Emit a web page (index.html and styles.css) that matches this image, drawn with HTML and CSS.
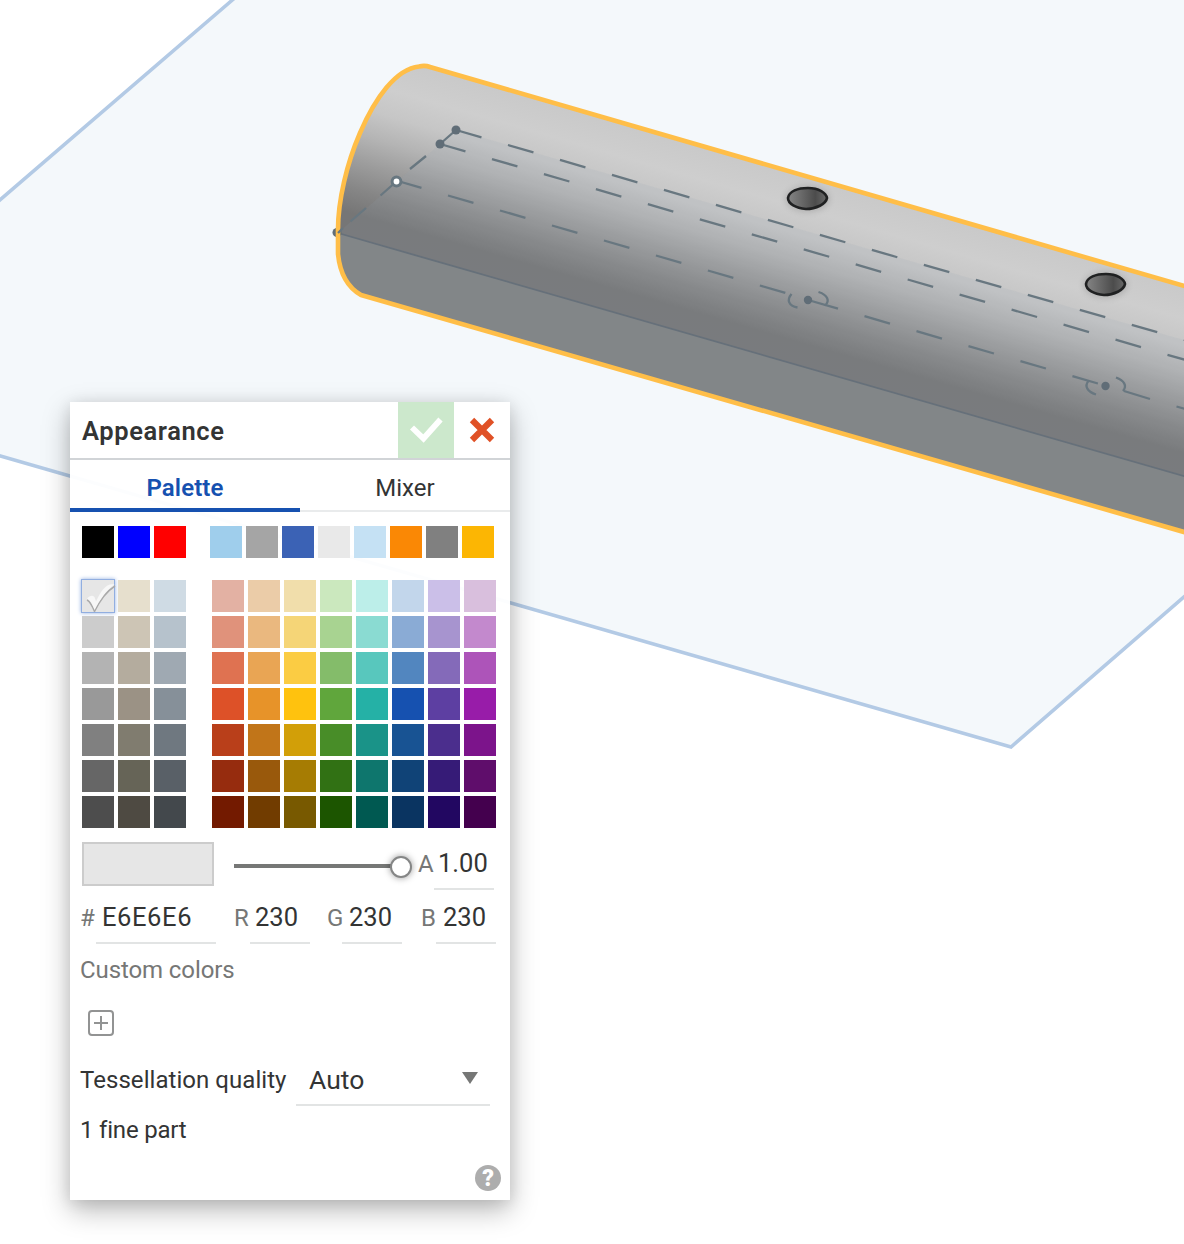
FILE: index.html
```html
<!DOCTYPE html>
<html lang="en">
<head>
<meta charset="utf-8">
<title>Appearance</title>
<link rel="stylesheet" href="styles.css">
</head>
<body>
<main class="workspace">
  <svg class="scene" viewBox="0 0 1184 1244" aria-hidden="true">
    <defs>
      <linearGradient id="tube" gradientUnits="userSpaceOnUse" x1="427" y1="66" x2="375.9" y2="243.3">
        <stop offset="0" stop-color="#c9c9c9"/>
        <stop offset=".18" stop-color="#cecece"/>
        <stop offset=".32" stop-color="#c6c6c6"/>
        <stop offset=".46" stop-color="#b4b4b4"/>
        <stop offset=".6" stop-color="#9d9d9d"/>
        <stop offset=".75" stop-color="#868686"/>
        <stop offset=".88" stop-color="#767676"/>
        <stop offset="1" stop-color="#767677"/>
      </linearGradient>
      <linearGradient id="bore">
        <stop offset="0" stop-color="#858585"/>
        <stop offset=".7" stop-color="#4c4c4c"/>
        <stop offset="1" stop-color="#6a6a6a"/>
      </linearGradient>
      <filter id="halo" x="-40%" y="-60%" width="180%" height="220%"><feGaussianBlur stdDeviation="3"/></filter>
    </defs>
    <path class="plane" d="M233-.5-10 208.5V453L1011 747 1200 583V-10H244Z"/>
    <path fill="url(#tube)" d="M1200 290.600 430 67Q425 65 419 66.500C396 69 375 98 360 133 347 163 338 200 338 230V254C340 274 347 287 361 295L1200 536.600Z"/>
    <path class="sketch-face" d="M456 130 1200 344.500V480.700L338 233Z"/>
    <path class="underside" d="M338 233 1200 480.700V536.600L361 295C347 287 340 274 338 254Z"/>
    <path class="seam" d="M338 233 1200 480.700"/>
    <circle class="node" cx="337" cy="232.500" r="4.500"/>
    <path class="outline" d="M1200 290.600 430 67Q425 65 419 66.500C396 69 375 98 360 133 347 163 338 200 338 230V254C340 274 347 287 361 295L1200 536.600"/>
    <g class="sketch">
      <path d="M338 233 343 228M350.500 221.500 366 208M380.500 195.500 393 184.500M410 169 426 156M440 144 456 130"/>
      <path class="dashes" d="M456 130 1200 344.500"/>
      <path class="dashes" d="M440 144 1200 364.200"/>
      <path class="dashes" d="M396 180.500 798 296.500"/>
      <path d="M808 300 838 308.600"/>
      <path class="dashes" d="M864.500 316.200 1100 384.100"/>
      <path d="M1124 391 1150 399M1176.500 406.500 1200 413.300"/>
      <path d="M791.500 294C786.500 300 788.500 306 797.500 307.500M818.500 292C828 295 830 301 825 305.500"/>
      <path d="M1088.500 381C1084 386 1087.500 392 1096 394.500M1116 377.500C1124 380.500 1127.500 385.500 1123 391"/>
    </g>
    <circle class="node" cx="456" cy="130" r="4.500"/>
    <circle class="node" cx="440" cy="144" r="4.500"/>
    <circle class="node" cx="808" cy="300" r="4.200"/>
    <circle class="node" cx="1105.500" cy="386" r="4.200"/>
    <circle class="origin" cx="396.500" cy="181.500" r="4.400"/>
    <g class="hole">
      <ellipse class="hole-halo" cx="807.500" cy="199" rx="22" ry="13"/>
      <path fill="url(#bore)" d="M788 198C789 191 798 188 808 188 819 188 826 193 827 198 826 204 816 209 806 209 796 208 788 204 788 198Z"/>
    </g>
    <g class="hole" transform="translate(298 86)">
      <ellipse class="hole-halo" cx="807.500" cy="199" rx="22" ry="13"/>
      <path fill="url(#bore)" d="M788 198C789 191 798 188 808 188 819 188 826 193 827 198 826 204 816 209 806 209 796 208 788 204 788 198Z"/>
    </g>
  </svg>

  <section class="dialog">
    <header class="dialog-head">
      <h1 class="title">Appearance</h1>
      <button class="accept" aria-label="Accept"><svg width="56" height="56" viewBox="0 0 56 56"><path d="M14 25.500 25.500 36.500 42.500 17.500" fill="none" stroke="#fff" stroke-width="5.800"/></svg></button>
      <button class="cancel" aria-label="Cancel"><svg width="56" height="56" viewBox="0 0 56 56"><path d="M18 18 38 38M38 18 18 38" fill="none" stroke="#e05126" stroke-width="6.200"/></svg></button>
    </header>
    <nav class="tabs">
      <a class="tab active"><span>Palette</span></a>
      <a class="tab"><span>Mixer</span></a>
    </nav>
    <div class="swatch-row recent">
      <div class="swatches three" data-palette="base"></div>
      <div class="swatches eight" data-palette="recent"></div>
    </div>
    <div class="swatch-row palette">
      <div class="swatches three" data-palette="neutral"></div>
      <div class="swatches eight" data-palette="hues"></div>
    </div>
    <div class="alpha-row">
      <div class="preview"></div>
      <div class="slider"><div class="thumb"></div></div>
      <div class="field alpha"><label>A</label><span class="value">1.00</span></div>
    </div>
    <div class="rgb-row">
      <div class="field hex"><label>#</label><span class="value">E6E6E6</span></div>
      <div class="field red"><label>R</label><span class="value">230</span></div>
      <div class="field green"><label>G</label><span class="value">230</span></div>
      <div class="field blue"><label>B</label><span class="value">230</span></div>
    </div>
    <div class="custom"><span>Custom colors</span></div>
    <button class="add" aria-label="Add color"><svg width="26" height="26" viewBox="0 0 26 26"><rect x="1" y="1" width="24" height="24" rx="3"/><path d="M6 13H20M13 6V20"/></svg></button>
    <div class="quality">
      <span class="quality-label">Tessellation quality</span>
      <div class="select"><span>Auto</span><svg width="16" height="12" viewBox="0 0 16 12"><path d="M0 0H16L8 12Z" fill="#767776"/></svg></div>
    </div>
    <div class="parts"><span>1 fine part</span></div>
    <footer class="foot"><span class="help">?</span></footer>
  </section>
</main>
<script src="palette.js"></script>
</body>
</html>
```
FILE: styles.css
```css
* { box-sizing: border-box; }
body { margin: 0; background: #fff; color: #333434; font: 24px/30px Roboto, "Liberation Sans", sans-serif; }
.workspace { position: relative; width: 1184px; height: 1244px; overflow: hidden; }
.scene { display: block; width: 1184px; height: 1244px; }
.plane { fill: #f4f8fb; stroke: #b3cae5; stroke-width: 3.6; }
.sketch-face { fill: #93a7b6; fill-opacity: .12; }
.underside { fill: #828688; }
.seam { fill: none; stroke: #66707a; stroke-width: 1.8; }
.outline { fill: none; stroke: #ffbe48; stroke-width: 4.6; stroke-linejoin: round; }
.sketch { fill: none; stroke: #687780; stroke-width: 2.3; }
.dashes { stroke-dasharray: 26.5 27.6; }
.node { fill: #606d77; }
.origin { fill: #fff; stroke: #687780; stroke-width: 3; }
.hole path { stroke: #202122; stroke-width: 2.6; }
.hole-halo { fill: #8c8c8c; opacity: .45; filter: url(#halo); }

.dialog { position: absolute; left: 70px; top: 402px; width: 440px; height: 798px; display: flex; flex-direction: column; background: rgba(255, 255, 255, .96); box-shadow: 0 10px 26px rgba(0, 0, 0, .28), 0 2px 14px rgba(0, 0, 0, .09); }
button { display: block; padding: 0; border: 0; background: none; font: inherit; }
button svg { display: block; }
.dialog-head { display: flex; height: 58px; background: #fff; border-bottom: 2px solid #d1d4d7; }
.title { flex: 1; margin: 0; padding-left: 12px; font-size: 25.5px; font-weight: 600; line-height: 59px; letter-spacing: .6px; }
.accept { background: #cce8cc; }
.tabs { display: flex; height: 52px; }
.tab { flex: 1; border-bottom: 2px solid #e9ebec; text-align: center; line-height: 56px; }
.tab.active { flex: 0 0 230px; border-bottom: 4px solid #1651b0; color: #1651b0; font-weight: 600; letter-spacing: .1px; }
.swatch-row { display: flex; padding-left: 12px; }
.recent { gap: 24px; margin-top: 14px; }
.palette { gap: 26px; margin-top: 22px; }
.swatches { display: grid; gap: 4px; grid-auto-rows: 32px; }
.three { grid-template-columns: repeat(3, 32px); }
.eight { grid-template-columns: repeat(8, 32px); }
.swatch { display: block; }
.swatch svg { display: block; }
.swatch.selected { box-shadow: 0 0 0 1px #91aee0, 0 0 4px 1px #91aee0; }
.alpha-row { display: flex; height: 48px; margin-top: 14px; padding: 0 16px 0 12px; }
.preview { width: 132px; height: 44px; background: #e6e6e6; border: 2px solid #ccc; }
.slider { display: flex; align-items: center; justify-content: flex-end; width: 178px; height: 4px; margin: 22px 6px 0 20px; background: linear-gradient(to right, #767776 160px, transparent 160px); }
.thumb { width: 22px; height: 22px; margin-top: 2px; flex: none; border: 2px solid #858686; border-radius: 50%; background: #fff; box-shadow: 0 0 7px rgba(0, 0, 0, .4); }
.field { display: flex; height: 48px; }
.field label { flex: none; width: 16px; color: #767776; line-height: 45px; }
.field .value { flex: 1; padding-left: 6px; border-bottom: 2px solid #e2e4e4; font-size: 25.5px; line-height: 43px; }
.alpha { width: 76px; }
.alpha .value { padding-left: 4px; }
.rgb-row { display: flex; height: 48px; margin-top: 6px; padding-left: 10px; }
.field.hex { width: 136px; }
.hex .value { letter-spacing: .6px; }
.red { width: 76px; margin-left: 18px; }
.green { width: 75px; margin-left: 17px; }
.blue { width: 75px; margin-left: 19px; }
.green .value, .blue .value { padding-left: 7px; }
.red .value { padding-left: 5px; }
.green label, .blue label { width: 15px; }
.custom { height: 66px; padding: 11px 0 0 10px; color: #767776; letter-spacing: -.1px; }
.add { width: 26px; margin-left: 18px; }
.add svg { fill: none; stroke: #929393; stroke-width: 2; }
.quality { display: flex; height: 70px; padding: 0 20px 0 10px; }
.quality-label { width: 216px; line-height: 89px; white-space: nowrap; letter-spacing: .05px; }
.select { display: flex; flex: 1; justify-content: space-between; padding: 0 12px 0 13px; border-bottom: 2px solid #e2e4e4; font-size: 26.5px; line-height: 87px; }
.select svg { margin-top: 36px; }
.parts { height: 59px; padding: 9px 0 0 10px; letter-spacing: -.2px; }
.foot { display: flex; justify-content: flex-end; padding-right: 9px; }
.help { width: 26px; height: 26px; border-radius: 50%; background: #adadad; color: #fff; font-size: 23px; font-weight: 900; line-height: 27px; text-align: center; }
```
FILE: palette.js
```js
const palettes = {
  base: ["#000000 #0000ff #ff0000"],
  recent: ["#9fceec #a5a5a5 #3b62b5 #e9e9e9 #c5e1f4 #fa8805 #808080 #fcb603"],
  neutral: [
    "#e6e6e6 #e6dfcd #cfdbe4", "#cccccc #cdc5b5 #b6c2cc", "#b3b3b3 #b4ac9e #9fa9b2",
    "#999999 #9b9285 #869099", "#808080 #807c6f #6f7880", "#666666 #666457 #596067",
    "#4d4d4d #4e4a42 #43484c"
  ],
  hues: [
    "#e3b1a3 #ebcca8 #f1deab #cbe8be #bceee9 #c2d6eb #cbbfe8 #d9bfdd",
    "#e0927b #eab87f #f5d577 #a8d391 #8adbd2 #8aabd5 #a794cf #c389cd",
    "#df7251 #e9a554 #fbcc43 #84bc6a #58c7bd #5286bf #846ab9 #ad54b9",
    "#dd5128 #e79329 #ffc20e #60a63c #25b1a6 #1651b0 #5d3fa2 #981ca9",
    "#b93f1a #c17519 #d29f08 #488d28 #1a9388 #185393 #4b2e8d #7c148b",
    "#962c0e #99590c #a67c03 #317114 #0e766d #104377 #361b77 #5f0d6b",
    "#731a00 #713c00 #785900 #1c5500 #005951 #0a3461 #220761 #44004e"
  ]
};
const tick = '<svg width="34" height="32" viewBox="0 0 34 32"><path d="M5 20C7 21 10 25 12.500 31.500 18 20 25 11 33 6" fill="none" stroke="#aaa" stroke-width="1.500"/><path d="M5 18.500Q9 14 12.500 17L14 21.500C19 11 24 3 32.500 4.500 24 10 18 20 12.500 30 10 23 8 20 5 18.500Z" fill="#f7f7f7"/></svg>';
document.querySelectorAll("[data-palette]").forEach(box => {
  palettes[box.dataset.palette].join(" ").split(" ").forEach((color, i) => {
    const cell = document.createElement("span");
    cell.className = "swatch";
    cell.style.background = color;
    if (box.dataset.palette === "neutral" && i === 0) {
      cell.classList.add("selected");
      cell.innerHTML = tick;
    }
    box.append(cell);
  });
});
```
